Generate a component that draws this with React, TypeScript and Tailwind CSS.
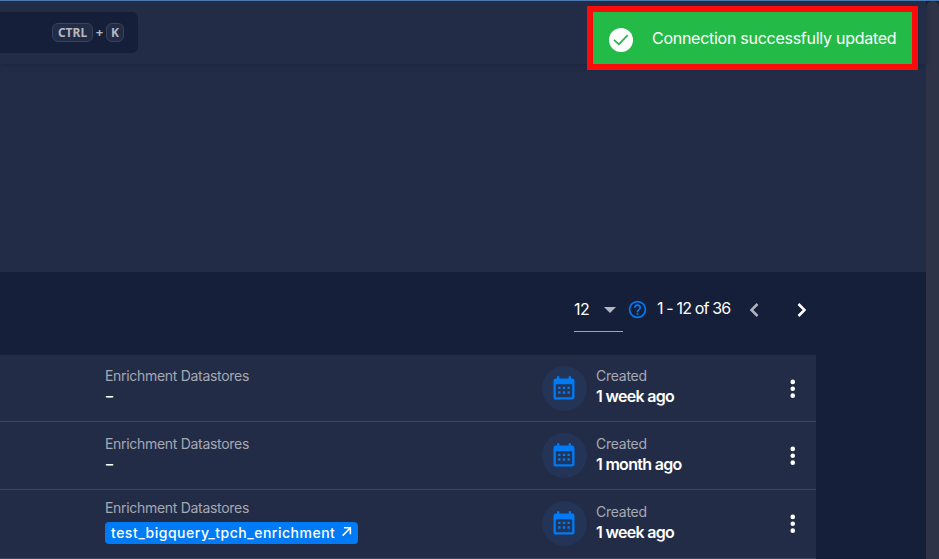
const CALENDAR =
  'M9,10V12H7V10H9M13,10V12H11V10H13M17,10V12H15V10H17M19,3A2,2 0 0,1 21,5V19A2,2 0 0,1 19,21H5C3.89,21 3,20.1 3,19V5A2,2 0 0,1 5,3H6V1H8V3H16V1H18V3H19M19,19V8H5V19H19M9,14V16H7V14H9M13,14V16H11V14H13M17,14V16H15V14H17Z';
const HELP =
  'M11,18H13V16H11V18M12,2A10,10 0 0,0 2,12A10,10 0 0,0 12,22A10,10 0 0,0 22,12A10,10 0 0,0 12,2M12,20C7.59,20 4,16.41 4,12C4,7.59 7.59,4 12,4C16.41,4 20,7.59 20,12C20,16.41 16.41,20 12,20M12,6A4,4 0 0,0 8,10H10A2,2 0 0,1 12,8A2,2 0 0,1 14,10C14,12 11,11.75 11,15H13C13,12.75 16,12.5 16,10A4,4 0 0,0 12,6Z';
const DOTS =
  'M12,16A2,2 0 0,1 14,18A2,2 0 0,1 12,20A2,2 0 0,1 10,18A2,2 0 0,1 12,16M12,10A2,2 0 0,1 14,12A2,2 0 0,1 12,14A2,2 0 0,1 10,12A2,2 0 0,1 12,10M12,4A2,2 0 0,1 14,6A2,2 0 0,1 12,8A2,2 0 0,1 10,6A2,2 0 0,1 12,4Z';

function Icon({ d, className }: { d: string; className: string }) {
  return (
    <svg viewBox="0 0 24 24" fill="currentColor" className={className}>
      <path d={d} />
    </svg>
  );
}

function Key({ children, width }: { children: string; width: string }) {
  return (
    <kbd className={`flex h-[19px] items-center justify-center rounded-[6px] border border-[#39425b] bg-[#232c46] font-['Noto_Sans',sans-serif] text-[12px] leading-none font-bold text-[#b5b8c1] ${width}`}>
      {children}
    </kbd>
  );
}

type RowProps = { created: string; tag?: string; height: string; textTop: string; labelTop: string };

function Row({ created, tag, height, textTop, labelTop }: RowProps) {
  return (
    <div className={`flex shrink-0 items-start border-b border-[#3c4560] bg-[#232c46] pl-[105px] ${height}`}>
      <div className={`w-[437px] ${labelTop}`}>
        <div className="h-5 text-[14px] leading-5 tracking-[-0.3px] text-[#a5a9b5]">Enrichment Datastores</div>
        {tag ? (
          <a className="mt-[4px] flex h-[22px] w-[253px] items-center justify-between rounded-[4px] bg-[#007bf5] pr-[6px] pb-px pl-[6px] text-[14px] font-medium tracking-[0.5px] text-white">
            <span className="whitespace-nowrap">{tag}</span>
            <svg viewBox="0 0 12 12" className="mb-[2px] size-[11px]" fill="none" stroke="currentColor" strokeWidth="1.7">
              <path d="M1.8 10.5 10 2.2M3.2 2H10.2V9" />
            </svg>
          </a>
        ) : (
          <div className="h-5 pl-px text-[14px] leading-5 font-semibold text-white">–</div>
        )}
      </div>
      <div className="mt-[11px] flex size-[45px] items-center justify-center rounded-full bg-[#233456] pr-px">
        <Icon d={CALENDAR} className="size-7 text-[#007bf5]" />
      </div>
      <div className={`ml-[9px] w-[183px] ${textTop}`}>
        <div className="h-5 text-[14px] leading-5 tracking-[-0.25px] text-[#a5a9b5]">Created</div>
        <div className="h-5 text-[16px] leading-5 font-semibold tracking-[-0.7px] text-white">{created}</div>
      </div>
      <Icon d={DOTS} className="mt-[20px] size-[27.5px] text-white" />
    </div>
  );
}

export default function App() {
  return (
    <div className="relative flex h-[559px] w-[939px] overflow-hidden border-t border-[#4c7ab0] bg-[#161f39] font-['Inter',sans-serif]">
      <div className="flex w-[926px] flex-col">
        <header className="z-10 flex h-[63px] shrink-0 items-start bg-[#232c46] pt-[11px] shadow-[0_1px_5px_rgba(15,22,42,0.35)]">
          <div className="flex h-[41px] w-[138px] items-center justify-end rounded-r-[6px] bg-[#161f39] pr-[14px]">
            <Key width="w-[41px]">CTRL</Key>
            <span className="w-[13px] text-center font-['Noto_Sans',sans-serif] text-[13px] leading-none font-bold text-[#b5b8c1]">+</span>
            <Key width="w-[18px]">K</Key>
          </div>
        </header>
        <section className="h-[208px] shrink-0 bg-[#232c46]" />
        <nav className="flex h-[83px] shrink-0 items-start pt-[17px] pl-[574px] text-[16px] text-white">
          <div className="flex h-[43px] w-[49px] items-center justify-between border-b border-[#a2a5b0] pr-[7px] pb-[1px]">
            <span className="pb-[2px] tracking-[-0.4px]">12</span>
            <span className="border-x-[6px] border-t-[6px] border-x-transparent border-t-[#b3b6bf]" />
          </div>
          <Icon d={HELP} className="mt-[10px] ml-[4px] size-[21px] text-[#007bf5]" />
          <span className="mt-[7px] ml-[9px] w-[80px] leading-6 tracking-[-0.85px] whitespace-nowrap">1 - 12 of 36</span>
          <svg viewBox="0 0 12 16" className="mt-[13px] ml-[11px] h-4 w-3" fill="none" stroke="#b0b3bd" strokeWidth="2.5">
            <path d="M9.5 2 3.5 8 9.5 14" />
          </svg>
          <svg viewBox="0 0 12 16" className="mt-[13px] ml-[36px] h-4 w-3" fill="none" stroke="white" strokeWidth="2.5">
            <path d="M2.5 2 8.5 8 2.5 14" />
          </svg>
        </nav>
        <main className="flex w-[816px] flex-col">
          <Row created="1 week ago" height="h-[67px]" textTop="pt-[11px]" labelTop="pt-[11px]" />
          <Row created="1 month ago" height="h-[68px]" textTop="pt-[12px]" labelTop="pt-[12px]" />
          <Row created="1 week ago" tag="test_bigquery_tpch_enrichment" height="h-[69px]" textTop="pt-[12px]" labelTop="pt-[8px]" />
        </main>
      </div>
      <div className="w-[13px] rounded-t-[6px] bg-[#2e3348]" />
      <div className="absolute top-[5px] left-[587px] z-20 flex h-[64px] w-[331px] items-center border-[6px] border-[#fa0c0c] bg-[#23ba47] pl-[16px]">
        <svg viewBox="0 0 24 24" className="mt-[3px] size-6">
          <circle cx="12" cy="12" r="12" fill="white" />
          <path d="M5 11.8 9.8 16.3 18.7 7.2" fill="none" stroke="#23ba47" strokeWidth="1.8" />
        </svg>
        <span className="ml-[19px] text-[16px] tracking-[-0.27px] whitespace-nowrap text-white">Connection successfully updated</span>
      </div>
    </div>
  );
}
